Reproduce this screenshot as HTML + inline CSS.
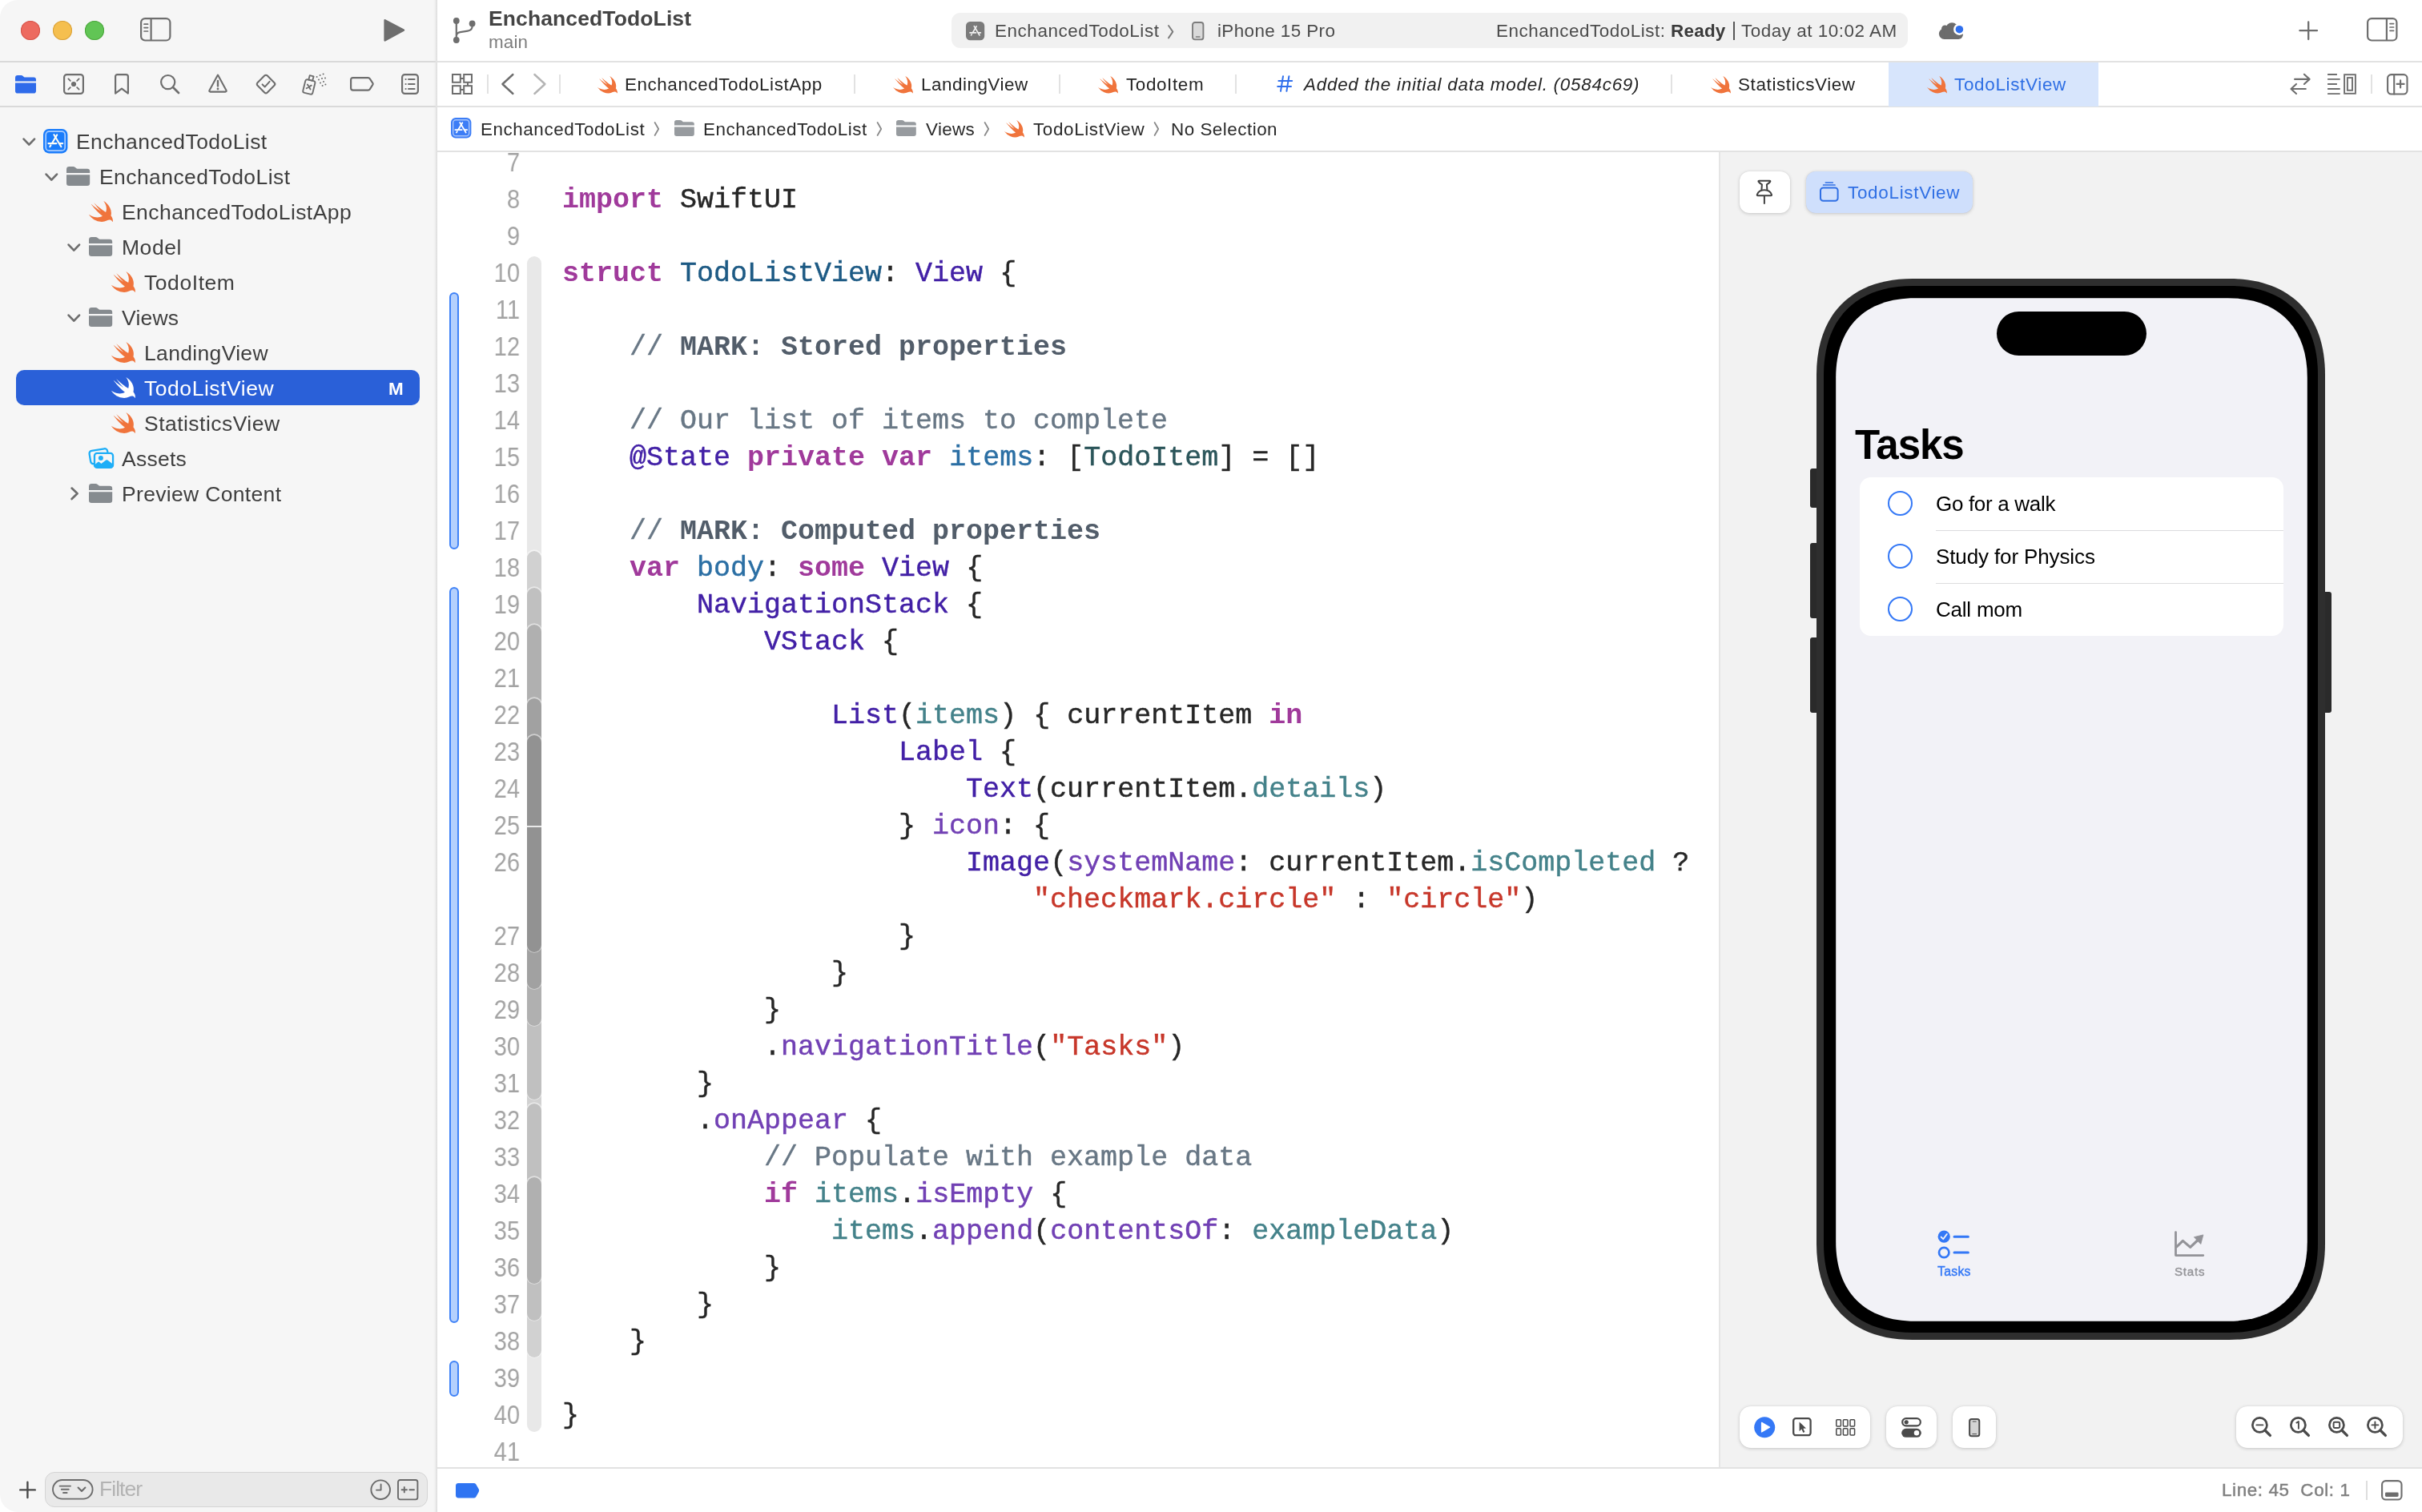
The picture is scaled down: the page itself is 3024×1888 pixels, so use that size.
<!DOCTYPE html>
<html lang="en"><head><meta charset="utf-8"><title>EnchancedTodoList — TodoListView.swift</title>
<style>
html,body{margin:0;padding:0;background:#fff;}
body{width:3024px;height:1888px;overflow:hidden;font-family:"Liberation Sans",sans-serif;}
#win{position:relative;width:3024px;height:1888px;overflow:hidden;background:#fff;}
.t,.cl,.ln{will-change:transform;}
.a{position:absolute;}
.t{position:absolute;white-space:pre;line-height:1;font-family:"Liberation Sans",sans-serif;}
svg{position:absolute;overflow:visible;}
#sidebar{left:0;top:0;width:545px;height:1888px;background:#f6f6f6;border-radius:22px 0 0 22px;}
.hl{background:#e2e2e2;height:2px;}
.vl{background:#dddddd;width:2px;}
.md{-webkit-text-stroke:0.45px;}
.sep{width:2px;height:24px;top:93px;background:#e2e2e2;}
#sel{left:20px;top:462px;width:504px;height:44px;border-radius:10px;background:#2a60d8;}
#pill{left:1188px;top:16px;width:1194px;height:44px;border-radius:11px;background:#f1f1f1;}
#acttab{left:2358px;top:78px;width:262px;height:55px;background:#d7e5fc;}
#filter{left:56px;top:1838px;width:476px;height:42px;border-radius:12px;background:#e9e9e9;border:1px solid #d4d4d4;}
/* code */
#code{left:546px;top:190px;width:1600px;height:1642px;overflow:hidden;background:#fff;}
.ln{position:absolute;left:0;width:103px;text-align:right;font-family:"Liberation Sans",sans-serif;font-size:33px;line-height:46px;height:46px;color:#a3a3a3;transform:scaleX(.88);transform-origin:100% 50%;}
.cl{position:absolute;left:156px;height:46px;line-height:46px;white-space:pre;font-family:"Liberation Mono",monospace;font-size:35px;color:#262626;-webkit-text-stroke:0.45px;}
.k{color:#a03a9b;font-weight:bold;-webkit-text-stroke:0;}
.dt{color:#1d5a84;}
.ty{color:#4220a6;}
.dv{color:#2b6fa4;}
.pj{color:#44828a;}
.pt{color:#2b555a;}
.fn{color:#7140b4;}
.s{color:#c7372a;}
.c{color:#687785;}
.cm{color:#525d6a;font-weight:bold;-webkit-text-stroke:0;}
.rb{position:absolute;left:112px;width:18px;border-radius:9px;box-sizing:border-box;}
.cb{position:absolute;left:15px;width:12px;border-radius:6px;box-sizing:border-box;border:2px solid #3f82f7;background:#b4d0fd;}
/* preview */
#pv{left:2146px;top:190px;width:878px;height:1642px;background:#f2f2f2;}
.btn{position:absolute;background:#fff;border-radius:14px;box-shadow:0 1px 4px rgba(0,0,0,.18),0 0 1px rgba(0,0,0,.12);}
#island{left:2493px;top:389px;width:187px;height:55px;border-radius:28px;background:#000;}
#card{left:2322px;top:596px;width:529px;height:198px;border-radius:14px;background:#fff;}
.pbtn{position:absolute;background:#2a2a2a;}
.ring{position:absolute;width:31px;height:31px;border-radius:50%;box-sizing:border-box;border:2.6px solid #3478f6;}

</style></head>
<body>
<div id="win">
<div class="a" id="sidebar"></div>
<div class="a hl" style="left:0;top:76px;width:544px;background:#d9d9d9"></div>
<div class="a hl" style="left:0;top:132px;width:544px;background:#d9d9d9"></div>
<div class="a hl" style="left:546px;top:76px;width:2478px"></div>
<div class="a hl" style="left:546px;top:132px;width:2478px"></div>
<div class="a hl" style="left:546px;top:188px;width:2478px"></div>
<div class="a hl" style="left:546px;top:1832px;width:2478px"></div>
<div class="a" style="left:541px;top:0;width:5px;height:1888px;background:linear-gradient(90deg,rgba(222,222,222,0) 0%,rgba(222,222,222,.25) 45%,#dedede 88%,#e4e4e4 100%)"></div>
<div class="a" style="left:26px;top:26px;width:24px;height:24px;border-radius:50%;background:#ed6a5f;box-shadow:inset 0 0 0 1px #d5554b"></div>
<div class="a" style="left:66px;top:26px;width:24px;height:24px;border-radius:50%;background:#f5bf4f;box-shadow:inset 0 0 0 1px #d9a13c"></div>
<div class="a" style="left:106px;top:26px;width:24px;height:24px;border-radius:50%;background:#61c555;box-shadow:inset 0 0 0 1px #4ea73f"></div>
<svg class="a" style="left:175px;top:22px" width="39" height="30" viewBox="0 0 39 30" ><rect x="1.1" y="1.1" width="36.3" height="27.4" rx="5" fill="none" stroke="#6e6e6e" stroke-width="2.2"/><path d="M13.6,1.1 V28.5" stroke="#6e6e6e" stroke-width="2.2"/><path d="M5,8.2 H9.6 M5,12.6 H9.6 M5,17 H9.6" stroke="#6e6e6e" stroke-width="1.7" stroke-linecap="round"/></svg>
<svg class="a" style="left:478px;top:23px" width="28" height="30" viewBox="0 0 28 30" ><path d="M2.6,2.2 L26,14.6 L2.6,27.4 Z" fill="#6e6e6e" stroke="#6e6e6e" stroke-width="2.4" stroke-linejoin="round"/></svg>
<svg class="a" style="left:19px;top:93.7px" width="26" height="22.5" viewBox="0 0 29.2 24.1" preserveAspectRatio="none"><path fill="#2f6bea" d="M0,7.9 V3.4 Q0,0 3.4,0 H8.3 Q9.8,0 10.9,1 L12.4,2.3 Q12.9,2.7 13.6,2.7 H25.9 Q29.2,2.7 29.2,5.9 V7.9 Z M0,10.2 H29.2 V20.8 Q29.2,24.1 25.9,24.1 H3.3 Q0,24.1 0,20.8 Z"/></svg>
<svg class="a" style="left:79px;top:92px" width="26" height="26" viewBox="0 0 26 26" ><rect x="1.1" y="1.1" width="23.8" height="23.8" rx="3.4" fill="none" stroke="#6e6e6e" stroke-width="2.2"/><circle cx="13" cy="13" r="3.1" fill="#6e6e6e"/><path d="M6.4,6.4 L8.8,8.8 M19.6,6.4 L17.2,8.8 M6.4,19.6 L8.8,17.2 M19.6,19.6 L17.2,17.2" stroke="#6e6e6e" stroke-width="1.9" stroke-linecap="round"/></svg>
<svg class="a" style="left:143px;top:92px" width="18" height="26" viewBox="0 0 18 26" ><path d="M1.1,24.6 V3.6 Q1.1,1.1 3.6,1.1 H14.4 Q16.9,1.1 16.9,3.6 V24.6 L9,18.6 Z" fill="none" stroke="#6e6e6e" stroke-width="2.2" stroke-linejoin="round"/></svg>
<svg class="a" style="left:199px;top:92px" width="26" height="26" viewBox="0 0 26 26" ><circle cx="10.7" cy="10.6" r="8.6" fill="none" stroke="#6e6e6e" stroke-width="2.2"/><path d="M17,17 L24,24" stroke="#6e6e6e" stroke-width="2.8" stroke-linecap="round"/></svg>
<svg class="a" style="left:260px;top:92px" width="24" height="24" viewBox="0 0 24 24" ><path d="M12,1.6 L22.6,21 Q23,22.6 21.4,22.6 H2.6 Q1,22.6 1.4,21 Z" fill="none" stroke="#6e6e6e" stroke-width="2.1" stroke-linejoin="round"/><path d="M12,9 V15.4" stroke="#6e6e6e" stroke-width="2.4" stroke-linecap="round"/><circle cx="12" cy="19" r="1.4" fill="#6e6e6e"/></svg>
<svg class="a" style="left:319px;top:91.6px" width="26" height="26" viewBox="0 0 26 26" ><rect x="4.3" y="4.3" width="17.4" height="17.4" rx="2.6" transform="rotate(45 13 13)" fill="none" stroke="#6e6e6e" stroke-width="2.1"/><polyline points="8.6,13.4 11.8,16.4 17.6,9.8" fill="none" stroke="#6e6e6e" stroke-width="2" stroke-linecap="round" stroke-linejoin="round"/></svg>
<svg class="a" style="left:377px;top:91px" width="31" height="28" viewBox="0 0 31 28" ><g transform="rotate(14 9 16)" fill="none" stroke="#6e6e6e" stroke-width="1.9" stroke-linejoin="round"><rect x="3" y="9" width="12.4" height="17" rx="2.4"/><rect x="6.6" y="3.4" width="5" height="5.6"/><path d="M6.6,15 L11.6,20 M11.6,15 L6.6,20" stroke-linecap="round"/></g><g fill="#6e6e6e"><circle cx="18.6" cy="5" r="1"/><circle cx="22.6" cy="3" r="1"/><circle cx="26.6" cy="1.6" r="1"/><circle cx="21" cy="8.6" r="1"/><circle cx="25" cy="7" r="1"/><circle cx="29" cy="6.6" r="1"/><circle cx="23" cy="12.4" r="1"/><circle cx="27" cy="11" r="1"/><circle cx="25.6" cy="16" r="1"/><circle cx="29.4" cy="14.6" r="1"/></g></svg>
<svg class="a" style="left:437px;top:96px" width="30" height="18" viewBox="0 0 30 18" ><path d="M3.6,1.1 H22.6 Q24,1.1 24.8,2.3 L28.5,8 Q28.9,8.7 28.5,9.5 L24.8,15.4 Q24,16.6 22.6,16.6 H3.6 Q1.1,16.6 1.1,14.1 V3.6 Q1.1,1.1 3.6,1.1 Z" fill="none" stroke="#6e6e6e" stroke-width="2.2" stroke-linejoin="round"/></svg>
<svg class="a" style="left:501px;top:92px" width="22" height="26" viewBox="0 0 22 26" ><rect x="1.1" y="1.1" width="19.8" height="23.8" rx="3.4" fill="none" stroke="#6e6e6e" stroke-width="2.2"/><path d="M9,7 H16.6 M9,13 H16.6 M9,19 H16.6" stroke="#6e6e6e" stroke-width="2" stroke-linecap="round"/><circle cx="5.6" cy="7" r="1.1" fill="#6e6e6e"/><circle cx="5.6" cy="13" r="1.1" fill="#6e6e6e"/><circle cx="5.6" cy="19" r="1.1" fill="#6e6e6e"/></svg>
<div class="a" id="sel"></div>
<svg class="a" style="left:27.5px;top:171.6px" width="17" height="11" viewBox="0 0 17 11" ><polyline points="1.6,1.6 8.3,8.6 15,1.6" fill="none" stroke="#6e6e6e" stroke-width="2.7" stroke-linecap="round" stroke-linejoin="round"/></svg>
<svg class="a" style="left:54.4px;top:161.2px" width="30.4" height="30.4" viewBox="0 0 30.4 30.4" ><rect x="0" y="0" width="30.4" height="30.4" rx="7" fill="#1a7cfb"/><rect x="3.2" y="3.2" width="24" height="24" rx="4.2" fill="none" stroke="#a9cdff" stroke-width="1.7"/><g stroke="#fffdf5" stroke-width="2.1" stroke-linecap="round" fill="none"><path d="M13.4,7.2 L22.4,22.2"/><path d="M17.2,7.4 L10.9,18"/><path d="M9.4,20.4 L8.3,22.2"/><path d="M6.4,18.1 H16.4"/><path d="M20.2,18.1 H24.2"/></g></svg>
<svg class="a" style="left:55.6px;top:215.6px" width="17" height="11" viewBox="0 0 17 11" ><polyline points="1.6,1.6 8.3,8.6 15,1.6" fill="none" stroke="#6e6e6e" stroke-width="2.7" stroke-linecap="round" stroke-linejoin="round"/></svg>
<svg class="a" style="left:82.8px;top:208.2px" width="29.2" height="24.1" viewBox="0 0 29.2 24.1" preserveAspectRatio="none"><path fill="#868b8f" d="M0,7.9 V3.4 Q0,0 3.4,0 H8.3 Q9.8,0 10.9,1 L12.4,2.3 Q12.9,2.7 13.6,2.7 H25.9 Q29.2,2.7 29.2,5.9 V7.9 Z M0,10.2 H29.2 V20.8 Q29.2,24.1 25.9,24.1 H3.3 Q0,24.1 0,20.8 Z"/></svg>
<svg class="a" style="left:111px;top:250.60000000000002px" width="29.8" height="26" viewBox="2.5 3.45 17.95 16.1" preserveAspectRatio="none"><path fill="#f0743c" d="M13.543 3.41c4.114 2.47 6.545 7.162 5.549 11.131-.024.093-.05.181-.076.272l.002.001c2.062 2.538 1.5 5.258 1.236 4.745-1.072-2.086-3.066-1.568-4.088-1.043a6.803 6.803 0 0 1-.281.158l-.02.012-.002.002c-2.115 1.123-4.957 1.205-7.812-.022a12.568 12.568 0 0 1-5.64-4.838c.649.48 1.35.902 2.097 1.252 3.019 1.414 6.051 1.311 8.197-.002C9.651 12.73 7.101 9.67 5.146 7.191a10.628 10.628 0 0 1-1.005-1.384c2.34 2.142 6.038 4.83 7.365 5.576C8.69 8.408 6.208 4.743 6.324 4.86c4.436 4.47 8.528 6.996 8.528 6.996.154.085.27.154.36.213.085-.215.16-.437.224-.668.708-2.588-.09-5.548-1.893-7.992z"/></svg>
<svg class="a" style="left:83.6px;top:303.6px" width="17" height="11" viewBox="0 0 17 11" ><polyline points="1.6,1.6 8.3,8.6 15,1.6" fill="none" stroke="#6e6e6e" stroke-width="2.7" stroke-linecap="round" stroke-linejoin="round"/></svg>
<svg class="a" style="left:110.8px;top:296.20000000000005px" width="29.2" height="24.1" viewBox="0 0 29.2 24.1" preserveAspectRatio="none"><path fill="#868b8f" d="M0,7.9 V3.4 Q0,0 3.4,0 H8.3 Q9.8,0 10.9,1 L12.4,2.3 Q12.9,2.7 13.6,2.7 H25.9 Q29.2,2.7 29.2,5.9 V7.9 Z M0,10.2 H29.2 V20.8 Q29.2,24.1 25.9,24.1 H3.3 Q0,24.1 0,20.8 Z"/></svg>
<svg class="a" style="left:139px;top:338.6px" width="29.8" height="26" viewBox="2.5 3.45 17.95 16.1" preserveAspectRatio="none"><path fill="#f0743c" d="M13.543 3.41c4.114 2.47 6.545 7.162 5.549 11.131-.024.093-.05.181-.076.272l.002.001c2.062 2.538 1.5 5.258 1.236 4.745-1.072-2.086-3.066-1.568-4.088-1.043a6.803 6.803 0 0 1-.281.158l-.02.012-.002.002c-2.115 1.123-4.957 1.205-7.812-.022a12.568 12.568 0 0 1-5.64-4.838c.649.48 1.35.902 2.097 1.252 3.019 1.414 6.051 1.311 8.197-.002C9.651 12.73 7.101 9.67 5.146 7.191a10.628 10.628 0 0 1-1.005-1.384c2.34 2.142 6.038 4.83 7.365 5.576C8.69 8.408 6.208 4.743 6.324 4.86c4.436 4.47 8.528 6.996 8.528 6.996.154.085.27.154.36.213.085-.215.16-.437.224-.668.708-2.588-.09-5.548-1.893-7.992z"/></svg>
<svg class="a" style="left:83.6px;top:391.6px" width="17" height="11" viewBox="0 0 17 11" ><polyline points="1.6,1.6 8.3,8.6 15,1.6" fill="none" stroke="#6e6e6e" stroke-width="2.7" stroke-linecap="round" stroke-linejoin="round"/></svg>
<svg class="a" style="left:110.8px;top:384.20000000000005px" width="29.2" height="24.1" viewBox="0 0 29.2 24.1" preserveAspectRatio="none"><path fill="#868b8f" d="M0,7.9 V3.4 Q0,0 3.4,0 H8.3 Q9.8,0 10.9,1 L12.4,2.3 Q12.9,2.7 13.6,2.7 H25.9 Q29.2,2.7 29.2,5.9 V7.9 Z M0,10.2 H29.2 V20.8 Q29.2,24.1 25.9,24.1 H3.3 Q0,24.1 0,20.8 Z"/></svg>
<svg class="a" style="left:139px;top:426.6px" width="29.8" height="26" viewBox="2.5 3.45 17.95 16.1" preserveAspectRatio="none"><path fill="#f0743c" d="M13.543 3.41c4.114 2.47 6.545 7.162 5.549 11.131-.024.093-.05.181-.076.272l.002.001c2.062 2.538 1.5 5.258 1.236 4.745-1.072-2.086-3.066-1.568-4.088-1.043a6.803 6.803 0 0 1-.281.158l-.02.012-.002.002c-2.115 1.123-4.957 1.205-7.812-.022a12.568 12.568 0 0 1-5.64-4.838c.649.48 1.35.902 2.097 1.252 3.019 1.414 6.051 1.311 8.197-.002C9.651 12.73 7.101 9.67 5.146 7.191a10.628 10.628 0 0 1-1.005-1.384c2.34 2.142 6.038 4.83 7.365 5.576C8.69 8.408 6.208 4.743 6.324 4.86c4.436 4.47 8.528 6.996 8.528 6.996.154.085.27.154.36.213.085-.215.16-.437.224-.668.708-2.588-.09-5.548-1.893-7.992z"/></svg>
<svg class="a" style="left:139px;top:470.6px" width="29.8" height="26" viewBox="2.5 3.45 17.95 16.1" preserveAspectRatio="none"><path fill="#ffffff" d="M13.543 3.41c4.114 2.47 6.545 7.162 5.549 11.131-.024.093-.05.181-.076.272l.002.001c2.062 2.538 1.5 5.258 1.236 4.745-1.072-2.086-3.066-1.568-4.088-1.043a6.803 6.803 0 0 1-.281.158l-.02.012-.002.002c-2.115 1.123-4.957 1.205-7.812-.022a12.568 12.568 0 0 1-5.64-4.838c.649.48 1.35.902 2.097 1.252 3.019 1.414 6.051 1.311 8.197-.002C9.651 12.73 7.101 9.67 5.146 7.191a10.628 10.628 0 0 1-1.005-1.384c2.34 2.142 6.038 4.83 7.365 5.576C8.69 8.408 6.208 4.743 6.324 4.86c4.436 4.47 8.528 6.996 8.528 6.996.154.085.27.154.36.213.085-.215.16-.437.224-.668.708-2.588-.09-5.548-1.893-7.992z"/></svg>
<svg class="a" style="left:139px;top:514.6px" width="29.8" height="26" viewBox="2.5 3.45 17.95 16.1" preserveAspectRatio="none"><path fill="#f0743c" d="M13.543 3.41c4.114 2.47 6.545 7.162 5.549 11.131-.024.093-.05.181-.076.272l.002.001c2.062 2.538 1.5 5.258 1.236 4.745-1.072-2.086-3.066-1.568-4.088-1.043a6.803 6.803 0 0 1-.281.158l-.02.012-.002.002c-2.115 1.123-4.957 1.205-7.812-.022a12.568 12.568 0 0 1-5.64-4.838c.649.48 1.35.902 2.097 1.252 3.019 1.414 6.051 1.311 8.197-.002C9.651 12.73 7.101 9.67 5.146 7.191a10.628 10.628 0 0 1-1.005-1.384c2.34 2.142 6.038 4.83 7.365 5.576C8.69 8.408 6.208 4.743 6.324 4.86c4.436 4.47 8.528 6.996 8.528 6.996.154.085.27.154.36.213.085-.215.16-.437.224-.668.708-2.588-.09-5.548-1.893-7.992z"/></svg>
<svg class="a" style="left:109px;top:556.0px" width="35" height="30" viewBox="0 0 35 30" ><g transform="translate(0.8,6.5) rotate(-9.3)"><rect x="1.1" y="1.1" width="22.8" height="16.4" rx="3.4" fill="none" stroke="#1eaef7" stroke-width="2.3"/></g><rect x="8.95" y="9.95" width="23.1" height="17.9" rx="3.2" fill="#f6f6f6" stroke="#1eaef7" stroke-width="2.3"/><circle cx="16.9" cy="16.1" r="3" fill="#1eaef7"/><path d="M9.6,24 L13.2,20.9 Q14.1,20.2 15,20.9 L17.4,23 L23.3,18.5 Q24.3,17.8 25.3,18.6 L31.2,23 V26 Q31.2,28 29,28 H11.8 Q9.6,28 9.6,26 Z" fill="#1eaef7"/></svg>
<svg class="a" style="left:88px;top:608.2px" width="11" height="17" viewBox="0 0 11 17" ><polyline points="1.6,1.6 8.6,8.3 1.6,15" fill="none" stroke="#6e6e6e" stroke-width="2.7" stroke-linecap="round" stroke-linejoin="round"/></svg>
<svg class="a" style="left:110.8px;top:604.2px" width="29.2" height="24.1" viewBox="0 0 29.2 24.1" preserveAspectRatio="none"><path fill="#868b8f" d="M0,7.9 V3.4 Q0,0 3.4,0 H8.3 Q9.8,0 10.9,1 L12.4,2.3 Q12.9,2.7 13.6,2.7 H25.9 Q29.2,2.7 29.2,5.9 V7.9 Z M0,10.2 H29.2 V20.8 Q29.2,24.1 25.9,24.1 H3.3 Q0,24.1 0,20.8 Z"/></svg>
<svg class="a" style="left:23px;top:1849px" width="23" height="23" viewBox="0 0 23 23" ><path d="M11.4,1.8 V21 M2.2,11.4 H20.8" stroke="#4a4a4a" stroke-width="2.4" stroke-linecap="round"/></svg>
<div class="a" id="filter"></div>
<svg class="a" style="left:65px;top:1847px" width="52" height="26" viewBox="0 0 52 26" ><rect x="1" y="1" width="49.6" height="23.6" rx="11.8" fill="none" stroke="#6c6c6c" stroke-width="1.9"/><path d="M9.6,8.6 H23 M11.8,12.8 H20.8 M14,17 H18.6" stroke="#6c6c6c" stroke-width="1.9" stroke-linecap="round"/><polyline points="32.6,10.6 37,15 41.4,10.6" fill="none" stroke="#6c6c6c" stroke-width="2.1" stroke-linecap="round" stroke-linejoin="round"/></svg>
<svg class="a" style="left:461.5px;top:1847px" width="27" height="27" viewBox="0 0 27 27" ><circle cx="13.2" cy="13.2" r="11.8" fill="none" stroke="#6a6a6a" stroke-width="1.9"/><path d="M13.6,6.4 V13.6 H8" fill="none" stroke="#6a6a6a" stroke-width="1.9" stroke-linecap="round" stroke-linejoin="round"/></svg>
<svg class="a" style="left:496px;top:1847px" width="27" height="27" viewBox="0 0 27 27" ><rect x="1" y="1" width="24.4" height="24.4" rx="2.6" fill="none" stroke="#6a6a6a" stroke-width="1.9"/><path d="M5.6,13.2 H12 M8.8,10 V16.4 M15.4,13.2 H21" stroke="#6a6a6a" stroke-width="1.9" stroke-linecap="round"/></svg>
<svg class="a" style="left:564px;top:22px" width="32" height="34" viewBox="0 0 32 34" ><g fill="#6e6e6e"><circle cx="5.8" cy="4" r="3.9"/><circle cx="25.6" cy="7.4" r="3.9"/><circle cx="5.8" cy="28" r="3.9"/></g><path d="M5.8,4 V28 M25.6,7.4 V11 Q25.6,15.6 20,16.6 L10.6,18.2 Q5.8,19.2 5.8,23" fill="none" stroke="#6e6e6e" stroke-width="2.2"/></svg>
<div class="a" id="pill"></div>
<svg class="a" style="left:1206px;top:26.6px" width="23.2" height="23.2" viewBox="0 0 24 24" ><rect width="24" height="24" rx="5.4" fill="#7b7b7b"/><g stroke="#f1f1f1" stroke-width="1.7" stroke-linecap="round" fill="none"><path d="M10.6,5.8 L17.6,17.6"/><path d="M13.6,6 L8.8,14.2"/><path d="M7.4,16.4 L6.8,17.6"/><path d="M5.2,14.4 H13"/><path d="M16,14.4 H19"/></g></svg>
<svg class="a" style="left:1458.4px;top:30.6px" width="8" height="18" viewBox="0 0 8 18" ><polyline points="1,1 6.3,8.6 1,16.4" fill="none" stroke="#7a7a7a" stroke-width="1.9" stroke-linecap="round" stroke-linejoin="round"/></svg>
<svg class="a" style="left:1488.4px;top:26.6px" width="16" height="24" viewBox="0 0 16 24" ><rect x="1" y="1" width="13.4" height="21.4" rx="3" fill="#d9d9d9" stroke="#7c7c7c" stroke-width="1.9"/><path d="M5.4,19 H10" stroke="#7c7c7c" stroke-width="1.4" stroke-linecap="round"/></svg>
<svg class="a" style="left:2420px;top:28px" width="34" height="23" viewBox="0 0 34 23" ><g fill="#6c6c6c"><circle cx="7.6" cy="14.3" r="6.7"/><circle cx="8.4" cy="7.9" r="4.4"/><circle cx="17.1" cy="7.9" r="7.7"/><circle cx="25.2" cy="15.3" r="5.7"/><rect x="7.6" y="8" width="17.6" height="13"/></g><circle cx="26.4" cy="8.7" r="7.3" fill="#ffffff"/><circle cx="26.4" cy="8.7" r="4.8" fill="#2f6fed"/></svg>
<svg class="a" style="left:2870px;top:26px" width="25" height="25" viewBox="0 0 25 25" ><path d="M12.2,1.4 V23 M1.4,12.2 H23" stroke="#6e6e6e" stroke-width="2.3" stroke-linecap="round"/></svg>
<svg class="a" style="left:2955px;top:22px" width="39" height="30" viewBox="0 0 39 30" ><rect x="1.1" y="1.1" width="36.3" height="27.4" rx="5" fill="none" stroke="#6e6e6e" stroke-width="2.2"/><path d="M24.9,1.1 V28.5" stroke="#6e6e6e" stroke-width="2.2"/><path d="M29,7.6 H33.6 M29,12 H33.6 M29,16.3 H33.6" stroke="#6e6e6e" stroke-width="1.7" stroke-linecap="round"/></svg>
<svg class="a" style="left:564px;top:92px" width="26" height="26" viewBox="0 0 26 26" ><g fill="none" stroke="#6e6e6e" stroke-width="2"><rect x="1" y="1" width="9.8" height="9.8"/><rect x="15.2" y="1" width="9.8" height="9.8"/><rect x="1" y="15.2" width="9.8" height="9.8"/><rect x="15.2" y="15.2" width="9.8" height="9.8"/><path d="M10.8,6 H15.2 M10.8,20 H15.2 M20,10.8 V15.2"/></g></svg>
<div class="a sep" style="left:608px"></div>
<svg class="a" style="left:625px;top:91px" width="18" height="28" viewBox="0 0 18 28" ><polyline points="15.4,2 2.4,14 15.4,26" fill="none" stroke="#6e6e6e" stroke-width="2.4" stroke-linecap="round" stroke-linejoin="round"/></svg>
<svg class="a" style="left:665px;top:91px" width="18" height="28" viewBox="0 0 18 28" ><polyline points="2.4,2 15.4,14 2.4,26" fill="none" stroke="#b4b4b4" stroke-width="2.4" stroke-linecap="round" stroke-linejoin="round"/></svg>
<div class="a sep" style="left:698px"></div>
<div class="a" id="acttab"></div>
<svg class="a" style="left:745.8px;top:94.6px" width="24.8" height="21.5" viewBox="2.5 3.45 17.95 16.1" preserveAspectRatio="none"><path fill="#f0743c" d="M13.543 3.41c4.114 2.47 6.545 7.162 5.549 11.131-.024.093-.05.181-.076.272l.002.001c2.062 2.538 1.5 5.258 1.236 4.745-1.072-2.086-3.066-1.568-4.088-1.043a6.803 6.803 0 0 1-.281.158l-.02.012-.002.002c-2.115 1.123-4.957 1.205-7.812-.022a12.568 12.568 0 0 1-5.64-4.838c.649.48 1.35.902 2.097 1.252 3.019 1.414 6.051 1.311 8.197-.002C9.651 12.73 7.101 9.67 5.146 7.191a10.628 10.628 0 0 1-1.005-1.384c2.34 2.142 6.038 4.83 7.365 5.576C8.69 8.408 6.208 4.743 6.324 4.86c4.436 4.47 8.528 6.996 8.528 6.996.154.085.27.154.36.213.085-.215.16-.437.224-.668.708-2.588-.09-5.548-1.893-7.992z"/></svg>
<div class="a sep" style="left:1066px"></div>
<svg class="a" style="left:1115.4px;top:94.6px" width="24.8" height="21.5" viewBox="2.5 3.45 17.95 16.1" preserveAspectRatio="none"><path fill="#f0743c" d="M13.543 3.41c4.114 2.47 6.545 7.162 5.549 11.131-.024.093-.05.181-.076.272l.002.001c2.062 2.538 1.5 5.258 1.236 4.745-1.072-2.086-3.066-1.568-4.088-1.043a6.803 6.803 0 0 1-.281.158l-.02.012-.002.002c-2.115 1.123-4.957 1.205-7.812-.022a12.568 12.568 0 0 1-5.64-4.838c.649.48 1.35.902 2.097 1.252 3.019 1.414 6.051 1.311 8.197-.002C9.651 12.73 7.101 9.67 5.146 7.191a10.628 10.628 0 0 1-1.005-1.384c2.34 2.142 6.038 4.83 7.365 5.576C8.69 8.408 6.208 4.743 6.324 4.86c4.436 4.47 8.528 6.996 8.528 6.996.154.085.27.154.36.213.085-.215.16-.437.224-.668.708-2.588-.09-5.548-1.893-7.992z"/></svg>
<div class="a sep" style="left:1322px"></div>
<svg class="a" style="left:1371.4px;top:94.6px" width="24.8" height="21.5" viewBox="2.5 3.45 17.95 16.1" preserveAspectRatio="none"><path fill="#f0743c" d="M13.543 3.41c4.114 2.47 6.545 7.162 5.549 11.131-.024.093-.05.181-.076.272l.002.001c2.062 2.538 1.5 5.258 1.236 4.745-1.072-2.086-3.066-1.568-4.088-1.043a6.803 6.803 0 0 1-.281.158l-.02.012-.002.002c-2.115 1.123-4.957 1.205-7.812-.022a12.568 12.568 0 0 1-5.64-4.838c.649.48 1.35.902 2.097 1.252 3.019 1.414 6.051 1.311 8.197-.002C9.651 12.73 7.101 9.67 5.146 7.191a10.628 10.628 0 0 1-1.005-1.384c2.34 2.142 6.038 4.83 7.365 5.576C8.69 8.408 6.208 4.743 6.324 4.86c4.436 4.47 8.528 6.996 8.528 6.996.154.085.27.154.36.213.085-.215.16-.437.224-.668.708-2.588-.09-5.548-1.893-7.992z"/></svg>
<div class="a sep" style="left:1542px"></div>
<svg class="a" style="left:1594px;top:94.4px" width="21" height="21" viewBox="0 0 21 21" ><path d="M8,1.2 L5,19.8 M15.4,1.2 L12.4,19.8 M2.4,7 H19.2 M1.2,14 H18" fill="none" stroke="#2f6fed" stroke-width="2" stroke-linecap="round"/></svg>
<div class="a sep" style="left:2086px"></div>
<svg class="a" style="left:2136px;top:94.6px" width="24.8" height="21.5" viewBox="2.5 3.45 17.95 16.1" preserveAspectRatio="none"><path fill="#f0743c" d="M13.543 3.41c4.114 2.47 6.545 7.162 5.549 11.131-.024.093-.05.181-.076.272l.002.001c2.062 2.538 1.5 5.258 1.236 4.745-1.072-2.086-3.066-1.568-4.088-1.043a6.803 6.803 0 0 1-.281.158l-.02.012-.002.002c-2.115 1.123-4.957 1.205-7.812-.022a12.568 12.568 0 0 1-5.64-4.838c.649.48 1.35.902 2.097 1.252 3.019 1.414 6.051 1.311 8.197-.002C9.651 12.73 7.101 9.67 5.146 7.191a10.628 10.628 0 0 1-1.005-1.384c2.34 2.142 6.038 4.83 7.365 5.576C8.69 8.408 6.208 4.743 6.324 4.86c4.436 4.47 8.528 6.996 8.528 6.996.154.085.27.154.36.213.085-.215.16-.437.224-.668.708-2.588-.09-5.548-1.893-7.992z"/></svg>
<svg class="a" style="left:2405.6px;top:94.6px" width="24.8" height="21.5" viewBox="2.5 3.45 17.95 16.1" preserveAspectRatio="none"><path fill="#f0743c" d="M13.543 3.41c4.114 2.47 6.545 7.162 5.549 11.131-.024.093-.05.181-.076.272l.002.001c2.062 2.538 1.5 5.258 1.236 4.745-1.072-2.086-3.066-1.568-4.088-1.043a6.803 6.803 0 0 1-.281.158l-.02.012-.002.002c-2.115 1.123-4.957 1.205-7.812-.022a12.568 12.568 0 0 1-5.64-4.838c.649.48 1.35.902 2.097 1.252 3.019 1.414 6.051 1.311 8.197-.002C9.651 12.73 7.101 9.67 5.146 7.191a10.628 10.628 0 0 1-1.005-1.384c2.34 2.142 6.038 4.83 7.365 5.576C8.69 8.408 6.208 4.743 6.324 4.86c4.436 4.47 8.528 6.996 8.528 6.996.154.085.27.154.36.213.085-.215.16-.437.224-.668.708-2.588-.09-5.548-1.893-7.992z"/></svg>
<svg class="a" style="left:2859px;top:92px" width="27" height="27" viewBox="0 0 27 27" ><g fill="none" stroke="#6e6e6e" stroke-width="2.1" stroke-linecap="round" stroke-linejoin="round"><path d="M6.1,6.9 H24.4 M17.9,0.8 L24.6,6.9 L17.9,13"/><path d="M19.8,19 H1.8 M8,12.9 L1.5,19 L8,25.1"/></g></svg>
<svg class="a" style="left:2905px;top:92px" width="38" height="27" viewBox="0 0 38 27" ><g fill="none" stroke="#6e6e6e" stroke-width="1.9"><path d="M1.1,1 H12.9 M1.1,6.9 H16.7 M1.1,13 H12.9 M1.1,19 H16.7 M1.1,25.1 H16.7" /><rect x="22.1" y="1.2" width="13.8" height="23.6"/><rect x="25.9" y="5.1" width="6.1" height="15.7"/></g></svg>
<div class="a sep" style="left:2960px"></div>
<svg class="a" style="left:2980px;top:92px" width="27" height="27" viewBox="0 0 27 27" ><g fill="none" stroke="#6e6e6e" stroke-width="2.1" stroke-linecap="round"><rect x="1.1" y="1.1" width="24.4" height="24.4" rx="4.4"/><path d="M9.2,1.1 V25.5 M12.6,12.9 H21.6 M17.1,8.4 V17.4"/></g></svg>
<svg class="a" style="left:562.8px;top:147.3px" width="25.4" height="25.4" viewBox="0 0 30.4 30.4" ><rect x="0" y="0" width="30.4" height="30.4" rx="7" fill="#3c7df6"/><rect x="3.2" y="3.2" width="24" height="24" rx="4.2" fill="none" stroke="#a9c6fb" stroke-width="1.7"/><g stroke="#ffffff" stroke-width="2.1" stroke-linecap="round" fill="none"><path d="M13.4,7.2 L22.4,22.2"/><path d="M17.2,7.4 L10.9,18"/><path d="M9.4,20.4 L8.3,22.2"/><path d="M6.4,18.1 H16.4"/><path d="M20.2,18.1 H24.2"/></g></svg>
<svg class="a" style="left:816px;top:151.5px" width="8" height="18" viewBox="0 0 8 18" ><polyline points="1.6,1 6.2,9 1.6,17" fill="none" stroke="#8a8a8a" stroke-width="1.8" stroke-linecap="round" stroke-linejoin="round"/></svg>
<svg class="a" style="left:841.5px;top:150.2px" width="24.8" height="20" viewBox="0 0 29.2 24.1" preserveAspectRatio="none"><path fill="#979b9f" d="M0,7.9 V3.4 Q0,0 3.4,0 H8.3 Q9.8,0 10.9,1 L12.4,2.3 Q12.9,2.7 13.6,2.7 H25.9 Q29.2,2.7 29.2,5.9 V7.9 Z M0,10.2 H29.2 V20.8 Q29.2,24.1 25.9,24.1 H3.3 Q0,24.1 0,20.8 Z"/></svg>
<svg class="a" style="left:1094.2px;top:151.5px" width="8" height="18" viewBox="0 0 8 18" ><polyline points="1.6,1 6.2,9 1.6,17" fill="none" stroke="#8a8a8a" stroke-width="1.8" stroke-linecap="round" stroke-linejoin="round"/></svg>
<svg class="a" style="left:1119.3px;top:150.2px" width="24.8" height="20" viewBox="0 0 29.2 24.1" preserveAspectRatio="none"><path fill="#979b9f" d="M0,7.9 V3.4 Q0,0 3.4,0 H8.3 Q9.8,0 10.9,1 L12.4,2.3 Q12.9,2.7 13.6,2.7 H25.9 Q29.2,2.7 29.2,5.9 V7.9 Z M0,10.2 H29.2 V20.8 Q29.2,24.1 25.9,24.1 H3.3 Q0,24.1 0,20.8 Z"/></svg>
<svg class="a" style="left:1228.4px;top:151.5px" width="8" height="18" viewBox="0 0 8 18" ><polyline points="1.6,1 6.2,9 1.6,17" fill="none" stroke="#8a8a8a" stroke-width="1.8" stroke-linecap="round" stroke-linejoin="round"/></svg>
<svg class="a" style="left:1253.6px;top:150px" width="24.8" height="21.5" viewBox="2.5 3.45 17.95 16.1" preserveAspectRatio="none"><path fill="#f0743c" d="M13.543 3.41c4.114 2.47 6.545 7.162 5.549 11.131-.024.093-.05.181-.076.272l.002.001c2.062 2.538 1.5 5.258 1.236 4.745-1.072-2.086-3.066-1.568-4.088-1.043a6.803 6.803 0 0 1-.281.158l-.02.012-.002.002c-2.115 1.123-4.957 1.205-7.812-.022a12.568 12.568 0 0 1-5.64-4.838c.649.48 1.35.902 2.097 1.252 3.019 1.414 6.051 1.311 8.197-.002C9.651 12.73 7.101 9.67 5.146 7.191a10.628 10.628 0 0 1-1.005-1.384c2.34 2.142 6.038 4.83 7.365 5.576C8.69 8.408 6.208 4.743 6.324 4.86c4.436 4.47 8.528 6.996 8.528 6.996.154.085.27.154.36.213.085-.215.16-.437.224-.668.708-2.588-.09-5.548-1.893-7.992z"/></svg>
<svg class="a" style="left:1440.2px;top:151.5px" width="8" height="18" viewBox="0 0 8 18" ><polyline points="1.6,1 6.2,9 1.6,17" fill="none" stroke="#8a8a8a" stroke-width="1.8" stroke-linecap="round" stroke-linejoin="round"/></svg>
<svg class="a" style="left:568.6px;top:1851.6px" width="30" height="19" viewBox="0 0 30 19" ><path d="M3.4,0 H22.6 Q24.2,0 25.2,1.2 L28.8,7.6 Q29.6,9.2 28.8,10.8 L25.2,17.2 Q24.2,18.4 22.6,18.4 H3.4 Q0,18.4 0,15 V3.4 Q0,0 3.4,0 Z" fill="#2f74f2"/></svg>
<div class="a" style="left:2954px;top:1849px;width:2px;height:24px;background:#dedede"></div>
<svg class="a" style="left:2973px;top:1847.8px" width="27" height="26" viewBox="0 0 27 26" ><rect x="1.1" y="1.1" width="24.4" height="23.4" rx="4.6" fill="none" stroke="#6e6e6e" stroke-width="2.1"/><rect x="5" y="15.4" width="16.6" height="5.6" rx="1.4" fill="#6e6e6e"/></svg>
<div class="a" id="code">
<div class="rb" style="top:129.5px;height:1468.0px;background:#e8e8e8;box-shadow:0 -0.5px 0 1.3px rgba(255,255,255,.5)"></div>
<div class="rb" style="top:497.5px;height:1007.5px;background:#d1d1d1;box-shadow:0 -0.5px 0 1.3px rgba(255,255,255,.5)"></div>
<div class="rb" style="top:543.5px;height:639.5px;background:#c0c0c0;box-shadow:0 -0.5px 0 1.3px rgba(255,255,255,.5)"></div>
<div class="rb" style="top:1187.5px;height:271.5px;background:#c0c0c0;box-shadow:0 -0.5px 0 1.3px rgba(255,255,255,.5)"></div>
<div class="rb" style="top:589.5px;height:501.5px;background:#b0b0b0;box-shadow:0 -0.5px 0 1.3px rgba(255,255,255,.5)"></div>
<div class="rb" style="top:1279.5px;height:133.5px;background:#b0b0b0;box-shadow:0 -0.5px 0 1.3px rgba(255,255,255,.5)"></div>
<div class="rb" style="top:681.5px;height:363.5px;background:#a1a1a1;box-shadow:0 -0.5px 0 1.3px rgba(255,255,255,.5)"></div>
<div class="rb" style="top:727.5px;height:271.5px;background:#929292;box-shadow:0 -0.5px 0 1.3px rgba(255,255,255,.5)"></div>
<div class="a" style="left:112px;width:18px;top:841.2px;height:1.6px;background:#e9e9e9"></div>
<div class="cb" style="top:174.5px;height:321.0px"></div>
<div class="cb" style="top:542.5px;height:919.0px"></div>
<div class="cb" style="top:1508.5px;height:45.0px"></div>
<div class="ln" style="top:-10.0px">7</div>
<div class="ln" style="top:36.0px">8</div>
<div class="cl" style="top:37.0px"><span class="k">import</span> SwiftUI</div>
<div class="ln" style="top:82.0px">9</div>
<div class="ln" style="top:128.0px">10</div>
<div class="cl" style="top:129.0px"><span class="k">struct</span> <span class="dt">TodoListView</span>: <span class="ty">View</span> {</div>
<div class="ln" style="top:174.0px">11</div>
<div class="ln" style="top:220.0px">12</div>
<div class="cl" style="top:221.0px">    <span class="c">// </span><span class="cm">MARK: Stored properties</span></div>
<div class="ln" style="top:266.0px">13</div>
<div class="ln" style="top:312.0px">14</div>
<div class="cl" style="top:313.0px">    <span class="c">// Our list of items to complete</span></div>
<div class="ln" style="top:358.0px">15</div>
<div class="cl" style="top:359.0px">    <span class="ty">@State</span> <span class="k">private</span> <span class="k">var</span> <span class="dv">items</span>: [<span class="pt">TodoItem</span>] = []</div>
<div class="ln" style="top:404.0px">16</div>
<div class="ln" style="top:450.0px">17</div>
<div class="cl" style="top:451.0px">    <span class="c">// </span><span class="cm">MARK: Computed properties</span></div>
<div class="ln" style="top:496.0px">18</div>
<div class="cl" style="top:497.0px">    <span class="k">var</span> <span class="dv">body</span>: <span class="k">some</span> <span class="ty">View</span> {</div>
<div class="ln" style="top:542.0px">19</div>
<div class="cl" style="top:543.0px">        <span class="ty">NavigationStack</span> {</div>
<div class="ln" style="top:588.0px">20</div>
<div class="cl" style="top:589.0px">            <span class="ty">VStack</span> {</div>
<div class="ln" style="top:634.0px">21</div>
<div class="ln" style="top:680.0px">22</div>
<div class="cl" style="top:681.0px">                <span class="ty">List</span>(<span class="pj">items</span>) { currentItem <span class="k">in</span></div>
<div class="ln" style="top:726.0px">23</div>
<div class="cl" style="top:727.0px">                    <span class="ty">Label</span> {</div>
<div class="ln" style="top:772.0px">24</div>
<div class="cl" style="top:773.0px">                        <span class="ty">Text</span>(currentItem.<span class="pj">details</span>)</div>
<div class="ln" style="top:818.0px">25</div>
<div class="cl" style="top:819.0px">                    } <span class="fn">icon</span>: {</div>
<div class="ln" style="top:864.0px">26</div>
<div class="cl" style="top:865.0px">                        <span class="ty">Image</span>(<span class="fn">systemName</span>: currentItem.<span class="pj">isCompleted</span> ?</div>
<div class="cl" style="top:911.0px">                            <span class="s">&quot;checkmark.circle&quot;</span> : <span class="s">&quot;circle&quot;</span>)</div>
<div class="ln" style="top:956.0px">27</div>
<div class="cl" style="top:957.0px">                    }</div>
<div class="ln" style="top:1002.0px">28</div>
<div class="cl" style="top:1003.0px">                }</div>
<div class="ln" style="top:1048.0px">29</div>
<div class="cl" style="top:1049.0px">            }</div>
<div class="ln" style="top:1094.0px">30</div>
<div class="cl" style="top:1095.0px">            .<span class="fn">navigationTitle</span>(<span class="s">&quot;Tasks&quot;</span>)</div>
<div class="ln" style="top:1140.0px">31</div>
<div class="cl" style="top:1141.0px">        }</div>
<div class="ln" style="top:1186.0px">32</div>
<div class="cl" style="top:1187.0px">        .<span class="fn">onAppear</span> {</div>
<div class="ln" style="top:1232.0px">33</div>
<div class="cl" style="top:1233.0px">            <span class="c">// Populate with example data</span></div>
<div class="ln" style="top:1278.0px">34</div>
<div class="cl" style="top:1279.0px">            <span class="k">if</span> <span class="pj">items</span>.<span class="fn">isEmpty</span> {</div>
<div class="ln" style="top:1324.0px">35</div>
<div class="cl" style="top:1325.0px">                <span class="pj">items</span>.<span class="fn">append</span>(<span class="fn">contentsOf</span>: <span class="pj">exampleData</span>)</div>
<div class="ln" style="top:1370.0px">36</div>
<div class="cl" style="top:1371.0px">            }</div>
<div class="ln" style="top:1416.0px">37</div>
<div class="cl" style="top:1417.0px">        }</div>
<div class="ln" style="top:1462.0px">38</div>
<div class="cl" style="top:1463.0px">    }</div>
<div class="ln" style="top:1508.0px">39</div>
<div class="ln" style="top:1554.0px">40</div>
<div class="cl" style="top:1555.0px">}</div>
<div class="ln" style="top:1600.0px">41</div>
</div>
<div class="a" id="pv"></div>
<div class="a" style="left:2146px;top:190px;width:2px;height:1642px;background:#e5e5e5"></div>
<div class="btn" style="left:2172px;top:214px;width:63px;height:52px;border-radius:12px"></div>
<svg class="a" style="left:2190px;top:222px" width="26" height="34" viewBox="0 0 26 34" ><g fill="none" stroke="#414141" stroke-width="2" stroke-linejoin="round" stroke-linecap="round"><path d="M6.4,3.7 H19.4 Q20.8,3.7 20.2,4.9 Q19,6.7 15.9,8.3 L16.4,15.6 M9.4,15.6 L9.9,8.3 Q6.8,6.7 5.6,4.9 Q5,3.7 6.4,3.7"/><path d="M4.8,22.2 Q3.4,22.2 3.9,20.8 C5.4,16.8 9.2,15.2 12.9,15.2 C16.6,15.2 20.4,16.8 21.9,20.8 Q22.4,22.2 21,22.2 Z"/><path d="M12.9,22.9 V32"/></g></svg>
<div class="btn" style="left:2255px;top:214px;width:208px;height:52px;border-radius:12px;background:#cfdffc"></div>
<svg class="a" style="left:2272px;top:226.6px" width="24" height="25" viewBox="0 0 24 25" ><g fill="none" stroke="#2f6fe4" stroke-linecap="round"><rect x="1" y="7.4" width="21.6" height="16.4" rx="3.4" stroke-width="2"/><path d="M4.6,4 H19" stroke-width="1.7"/><path d="M7.2,1 H16.4" stroke-width="1.4"/></g></svg>
<div class="pbtn" style="left:2260px;top:585px;width:10px;height:49px;border-radius:3px 0 0 3px"></div>
<div class="pbtn" style="left:2260px;top:678px;width:10px;height:94px;border-radius:3px 0 0 3px"></div>
<div class="pbtn" style="left:2260px;top:796px;width:10px;height:94px;border-radius:3px 0 0 3px"></div>
<div class="pbtn" style="left:2901px;top:739px;width:10px;height:151px;border-radius:0 3px 3px 0"></div>
<svg class="a" style="left:2268px;top:348px" width="635" height="1325" viewBox="0 0 635 1325" ><path d="M0,120 C0,44.04 44.04,0 120,0 H515 C590.96,0 635,44.04 635,120 V1205 C635,1280.96 590.96,1325 515,1325 H120 C44.04,1325 0,1280.96 0,1205 Z" fill="#2e2e2e"/><path d="M9,120 C9,49.737 49.737,9 120,9 H515 C585.263,9 626,49.737 626,120 V1205 C626,1275.263 585.263,1316 515,1316 H120 C49.737,1316 9,1275.263 9,1205 Z" fill="#000"/><path d="M24.2,123.2 C24.2,60.533 60.533,24.2 123.2,24.2 H513.8000000000001 C576.4670000000001,24.2 612.8000000000001,60.533 612.8000000000001,123.2 V1202.8 C612.8000000000001,1265.4669999999999 576.4670000000001,1301.8 513.8000000000001,1301.8 H123.2 C60.533,1301.8 24.2,1265.4669999999999 24.2,1202.8 Z" fill="#f2f2f7"/></svg>
<div class="a" id="island"></div>
<div class="a" id="card"></div>
<div class="ring" style="left:2357.1px;top:613.4px"></div>
<div class="a" style="left:2417px;top:661.9px;width:434px;height:1.3px;background:#dcdcde"></div>
<div class="ring" style="left:2357.1px;top:679.4px"></div>
<div class="a" style="left:2417px;top:727.9px;width:434px;height:1.3px;background:#dcdcde"></div>
<div class="ring" style="left:2357.1px;top:745.4px"></div>
<svg class="a" style="left:2419px;top:1535.6px" width="41" height="37" viewBox="0 0 41 37" ><circle cx="8.2" cy="8.2" r="7.6" fill="#3478f6"/><polyline points="4.6,8.6 7.2,11.2 11.8,5" fill="none" stroke="#f2f2f7" stroke-width="1.9" stroke-linecap="round" stroke-linejoin="round"/><circle cx="8.2" cy="28" r="6.2" fill="none" stroke="#3478f6" stroke-width="2.7"/><path d="M21,8.2 H38.4 M21,28 H38.4" stroke="#3478f6" stroke-width="3" stroke-linecap="round"/></svg>
<svg class="a" style="left:2714px;top:1536px" width="40" height="35" viewBox="0 0 40 35" ><g fill="none" stroke="#939398" stroke-linecap="round" stroke-linejoin="round"><path d="M2.5,2.6 V31.6 H36.8" stroke-width="2.8"/><path d="M3.9,20.6 L11.4,13.4 L20.7,21.4 L30.6,12" stroke-width="3.2"/></g><path d="M25.4,8.7 L36.9,5.9 L33.8,17.5 Z" fill="#939398" stroke="#939398" stroke-width="0.8" stroke-linejoin="round"/></svg>
<div class="btn" style="left:2172px;top:1756px;width:163px;height:52px"></div>
<svg class="a" style="left:2190px;top:1769px" width="27" height="27" viewBox="0 0 27 27" ><circle cx="13.2" cy="13.2" r="13" fill="#3478f6"/><path d="M9.6,7.4 L19.4,13.2 L9.6,19 Z" fill="#fff" stroke="#fff" stroke-width="1.4" stroke-linejoin="round"/></svg>
<svg class="a" style="left:2238px;top:1770px" width="25" height="25" viewBox="0 0 25 25" ><rect x="1.2" y="1.2" width="21.4" height="21" rx="3" fill="none" stroke="#4a4a4a" stroke-width="2.3"/><path d="M8.6,5.4 V17.2 L11.4,14.6 L13.4,19 L15.4,18 L13.4,13.8 L17,13.6 Z" fill="#4a4a4a"/></svg>
<svg class="a" style="left:2291.6px;top:1771.6px" width="25" height="21" viewBox="0 0 25 21" ><rect x="0.8" y="0.8" width="5.6" height="8.2" rx="1" fill="none" stroke="#4a4a4a" stroke-width="1.5"/><rect x="9.4" y="0.8" width="5.6" height="8.2" rx="1" fill="none" stroke="#4a4a4a" stroke-width="1.5"/><rect x="18.0" y="0.8" width="5.6" height="8.2" rx="1" fill="none" stroke="#4a4a4a" stroke-width="1.5"/><rect x="0.8" y="11.8" width="5.6" height="8.2" rx="1" fill="none" stroke="#4a4a4a" stroke-width="1.5"/><rect x="9.4" y="11.8" width="5.6" height="8.2" rx="1" fill="none" stroke="#4a4a4a" stroke-width="1.5"/><rect x="18.0" y="11.8" width="5.6" height="8.2" rx="1" fill="none" stroke="#4a4a4a" stroke-width="1.5"/></svg>
<div class="btn" style="left:2355px;top:1756px;width:63px;height:52px"></div>
<svg class="a" style="left:2373.6px;top:1770px" width="26" height="26" viewBox="0 0 26 26" ><rect x="1.2" y="1.2" width="22.6" height="9.2" rx="4.6" fill="none" stroke="#4a4a4a" stroke-width="2.2"/><circle cx="6.2" cy="5.8" r="2.6" fill="#4a4a4a"/><rect x="0.2" y="13.8" width="24.6" height="11" rx="5.5" fill="#4a4a4a"/><circle cx="19" cy="19.3" r="3.2" fill="#fff"/></svg>
<div class="btn" style="left:2438px;top:1756px;width:54px;height:52px"></div>
<svg class="a" style="left:2457.6px;top:1770.6px" width="15" height="24" viewBox="0 0 15 24" ><rect x="1.1" y="1.1" width="12.2" height="21.2" rx="2.6" fill="#d4d4d4" stroke="#4a4a4a" stroke-width="2"/><path d="M5.2,4 H9.2 M4.8,19.6 H9.6" stroke="#4a4a4a" stroke-width="1" stroke-linecap="round"/></svg>
<div class="btn" style="left:2792px;top:1756px;width:208px;height:52px"></div>
<svg class="a" style="left:2810.9px;top:1769px" width="26" height="26" viewBox="0 0 26 26" ><circle cx="10.4" cy="10.4" r="9" fill="none" stroke="#4a4a4a" stroke-width="2.7"/><path d="M17,17 L23.4,23.4" stroke="#4a4a4a" stroke-width="3.3" stroke-linecap="round"/><path d="M6.4,10.4 H14.4" stroke="#4a4a4a" stroke-width="1.9" stroke-linecap="round"/></svg>
<svg class="a" style="left:2858.7999999999997px;top:1769px" width="26" height="26" viewBox="0 0 26 26" ><circle cx="10.4" cy="10.4" r="9" fill="none" stroke="#4a4a4a" stroke-width="2.7"/><path d="M17,17 L23.4,23.4" stroke="#4a4a4a" stroke-width="3.3" stroke-linecap="round"/><path d="M8.4,7.6 L10.9,6 V14.8" fill="none" stroke="#4a4a4a" stroke-width="1.9" stroke-linecap="round" stroke-linejoin="round"/></svg>
<svg class="a" style="left:2906.9px;top:1769px" width="26" height="26" viewBox="0 0 26 26" ><circle cx="10.4" cy="10.4" r="9" fill="none" stroke="#4a4a4a" stroke-width="2.7"/><path d="M17,17 L23.4,23.4" stroke="#4a4a4a" stroke-width="3.3" stroke-linecap="round"/><rect x="6.6" y="6.8" width="7.6" height="7.2" rx="1.4" fill="none" stroke="#4a4a4a" stroke-width="2"/></svg>
<svg class="a" style="left:2954.9px;top:1769px" width="26" height="26" viewBox="0 0 26 26" ><circle cx="10.4" cy="10.4" r="9" fill="none" stroke="#4a4a4a" stroke-width="2.7"/><path d="M17,17 L23.4,23.4" stroke="#4a4a4a" stroke-width="3.3" stroke-linecap="round"/><path d="M6.4,10.4 H14.4 M10.4,6.4 V14.4" stroke="#4a4a4a" stroke-width="1.9" stroke-linecap="round"/></svg>
<span class="t" id="t0" style="left:95.1px;top:164.1px;font-size:26.52px;color:#3f3f3f;letter-spacing:0.422px;">EnchancedTodoList</span>
<span class="t" id="t1" style="left:123.5px;top:208.1px;font-size:26.52px;color:#3f3f3f;letter-spacing:0.410px;">EnchancedTodoList</span>
<span class="t" id="t2" style="left:151.5px;top:252.1px;font-size:26.52px;color:#3f3f3f;letter-spacing:0.425px;">EnchancedTodoListApp</span>
<span class="t" id="t3" style="left:151.5px;top:296.1px;font-size:26.52px;color:#3f3f3f;letter-spacing:0.537px;">Model</span>
<span class="t" id="t4" style="left:179.6px;top:340.1px;font-size:26.52px;color:#3f3f3f;letter-spacing:0.555px;">TodoItem</span>
<span class="t" id="t5" style="left:151.5px;top:384.1px;font-size:26.52px;color:#3f3f3f;letter-spacing:0.191px;">Views</span>
<span class="t" id="t6" style="left:179.6px;top:428.1px;font-size:26.52px;color:#3f3f3f;letter-spacing:0.322px;">LandingView</span>
<span class="t" id="t7" style="left:179.6px;top:472.1px;font-size:26.52px;color:#ffffff;letter-spacing:0.538px;">TodoListView</span>
<span class="t" id="t8" style="left:484.7px;top:475.1px;font-size:22.44px;color:#ffffff;font-weight:700;letter-spacing:1.292px;">M</span>
<span class="t" id="t9" style="left:179.6px;top:516.1px;font-size:26.52px;color:#3f3f3f;letter-spacing:0.459px;">StatisticsView</span>
<span class="t" id="t10" style="left:151.5px;top:560.1px;font-size:26.52px;color:#3f3f3f;letter-spacing:0.257px;">Assets</span>
<span class="t" id="t11" style="left:151.5px;top:604.1px;font-size:26.52px;color:#3f3f3f;letter-spacing:0.318px;">Preview Content</span>
<span class="t" id="t12" style="left:123.6px;top:1846.1px;font-size:26.52px;color:#b3b3b3;letter-spacing:-0.969px;">Filter</span>
<span class="t" id="t13" style="left:610.0px;top:10.1px;font-size:26.52px;color:#444444;font-weight:700;letter-spacing:0.100px;">EnchancedTodoList</span>
<span class="t" id="t14" style="left:610.2px;top:42.1px;font-size:22.44px;color:#7d7d7d;letter-spacing:0.114px;">main</span>
<span class="t" id="t15" style="left:1241.7px;top:28.1px;font-size:22.44px;color:#4b4b4b;letter-spacing:0.567px;">EnchancedTodoList</span>
<span class="t" id="t16" style="left:1519.9px;top:28.1px;font-size:22.44px;color:#4b4b4b;letter-spacing:0.390px;">iPhone 15 Pro</span>
<span class="t" id="t17" style="left:1867.9px;top:28.1px;font-size:22.44px;color:#4b4b4b;letter-spacing:0.528px;">EnchancedTodoList:</span>
<span class="t" id="t18" style="left:2086.1px;top:28.1px;font-size:22.44px;color:#3a3a3a;font-weight:700;letter-spacing:0.247px;">Ready</span>
<span class="t" id="t19" style="left:2161.6px;top:26.1px;font-size:23px;color:#4b4b4b;">|</span>
<span class="t" id="t20" style="left:2174.3px;top:28.1px;font-size:22.44px;color:#4b4b4b;letter-spacing:0.526px;">Today at 10:02 AM</span>
<span class="t" id="t21" style="left:780.1px;top:95.1px;font-size:22.44px;color:#262626;letter-spacing:0.551px;">EnchancedTodoListApp</span>
<span class="t" id="t22" style="left:1150.1px;top:95.1px;font-size:22.44px;color:#262626;letter-spacing:0.500px;">LandingView</span>
<span class="t" id="t23" style="left:1405.7px;top:95.1px;font-size:22.44px;color:#262626;letter-spacing:0.612px;">TodoItem</span>
<span class="t" id="t24" style="left:1627.7px;top:95.1px;font-size:22.44px;color:#262626;font-style:italic;letter-spacing:0.740px;">Added the initial data model. (0584c69)</span>
<span class="t" id="t25" style="left:2169.9px;top:95.1px;font-size:22.44px;color:#262626;letter-spacing:0.621px;">StatisticsView</span>
<span class="t" id="t26" style="left:2439.9px;top:95.1px;font-size:22.44px;color:#2f6fe4;letter-spacing:0.682px;">TodoListView</span>
<span class="t" id="t27" style="left:599.9px;top:151.1px;font-size:22.44px;color:#2a2a2a;letter-spacing:0.549px;">EnchancedTodoList</span>
<span class="t" id="t28" style="left:878.1px;top:151.1px;font-size:22.44px;color:#2a2a2a;letter-spacing:0.532px;">EnchancedTodoList</span>
<span class="t" id="t29" style="left:1155.9px;top:151.1px;font-size:22.44px;color:#2a2a2a;letter-spacing:0.348px;">Views</span>
<span class="t" id="t30" style="left:1289.6px;top:151.1px;font-size:22.44px;color:#2a2a2a;letter-spacing:0.624px;">TodoListView</span>
<span class="t" id="t31" style="left:1461.8px;top:151.1px;font-size:22.44px;color:#2a2a2a;letter-spacing:0.488px;">No Selection</span>
<span class="t md" id="t32" style="left:2773.9px;top:1850.1px;font-size:22.44px;color:#7f7f7f;letter-spacing:0.604px;">Line: 45  Col: 1</span>
<span class="t" id="t33" style="left:2306.8px;top:230.1px;font-size:22.44px;color:#2f6fe4;letter-spacing:0.699px;">TodoListView</span>
<span class="t" id="t34" style="left:2316.0px;top:530.1px;font-size:51.0px;color:#000;font-weight:700;letter-spacing:-1.050px;">Tasks</span>
<span class="t" id="t35" style="left:2417.0px;top:616.1px;font-size:26.01px;color:#000;letter-spacing:-0.315px;">Go for a walk</span>
<span class="t" id="t36" style="left:2417.0px;top:682.1px;font-size:26.01px;color:#000;letter-spacing:-0.122px;">Study for Physics</span>
<span class="t" id="t37" style="left:2417.0px;top:748.1px;font-size:26.01px;color:#000;letter-spacing:-0.227px;">Call mom</span>
<span class="t md" id="t38" style="left:2419.1px;top:1580.1px;font-size:15.81px;color:#3478f6;letter-spacing:0.275px;">Tasks</span>
<span class="t md" id="t39" style="left:2715.0px;top:1580.1px;font-size:15.1px;color:#959599;letter-spacing:0.800px;">Stats</span>
</div>
</body></html>
